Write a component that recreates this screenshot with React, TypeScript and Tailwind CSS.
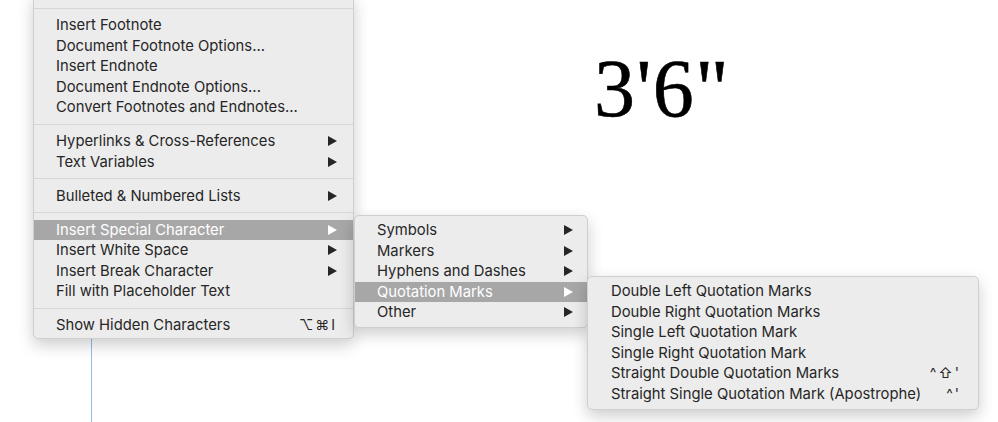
import React from 'react';

type Item = { label?: string; sep?: boolean; sub?: boolean; key?: string; active?: boolean };

const mainMenu: Item[] = [
  { sep: true },
  { label: 'Insert Footnote' },
  { label: 'Document Footnote Options...' },
  { label: 'Insert Endnote' },
  { label: 'Document Endnote Options...' },
  { label: 'Convert Footnotes and Endnotes...' },
  { sep: true },
  { label: 'Hyperlinks & Cross-References', sub: true },
  { label: 'Text Variables', sub: true },
  { sep: true },
  { label: 'Bulleted & Numbered Lists', sub: true },
  { sep: true },
  { label: 'Insert Special Character', sub: true, active: true },
  { label: 'Insert White Space', sub: true },
  { label: 'Insert Break Character', sub: true },
  { label: 'Fill with Placeholder Text' },
  { sep: true },
  { label: 'Show Hidden Characters', key: '⌥⌘I' },
];

const specialMenu: Item[] = [
  { label: 'Symbols', sub: true },
  { label: 'Markers', sub: true },
  { label: 'Hyphens and Dashes', sub: true },
  { label: 'Quotation Marks', sub: true, active: true },
  { label: 'Other', sub: true },
];

const quoteMenu: Item[] = [
  { label: 'Double Left Quotation Marks' },
  { label: 'Double Right Quotation Marks' },
  { label: 'Single Left Quotation Mark' },
  { label: 'Single Right Quotation Mark' },
  { label: 'Straight Double Quotation Marks', key: "^⇧'" },
  { label: 'Straight Single Quotation Mark (Apostrophe)', key: "^'" },
];

const Arrow = ({ light }: { light?: boolean }) => (
  <svg width="9" height="10" viewBox="0 0 9 10">
    <polygon points="0,0 9,5 0,10" fill={light ? '#ffffff' : '#262626'} />
  </svg>
);

const Menu = ({ items, pl, pr }: { items: Item[]; pl: string; pr: string }) => (
  <div className="flex flex-col">
    {items.map((it, i) =>
      it.sep ? (
        <div key={i} className="h-[13.5px] flex items-center">
          <div className="h-px w-full bg-[#d6d6d6]" />
        </div>
      ) : (
        <div
          key={i}
          className={`h-[20.5px] flex items-center justify-between ${pl} ${pr} ${
            it.active ? 'bg-[#a7a7a7] text-white' : 'text-[#262626]'
          }`}
        >
          <span>{it.label}</span>
          {it.sub && <Arrow light={it.active} />}
          {it.key && <span className="text-[14px] tracking-[2px]">{it.key}</span>}
        </div>
      )
    )}
  </div>
);

const panel =
  'absolute bg-[#ececec] border border-[#cfcfcf] rounded-[5px] shadow-[0_6px_16px_rgba(0,0,0,0.2)] overflow-hidden';

export default function App() {
  return (
    <div
      className="relative w-[998px] h-[422px] bg-white overflow-hidden text-[14.8px] leading-[20px]"
      style={{ fontFamily: 'Inter, "Noto Sans", sans-serif' }}
    >
      <div className="absolute left-[91px] top-[336px] w-px h-[90px] bg-[#8fbcf0]" />

      <div
        className="absolute left-[594px] top-[48px] text-[82px] leading-none tracking-[1.5px] text-black"
        style={{ fontFamily: '"Liberation Serif", serif', WebkitTextStroke: '0.6px black' }}
      >
        3'6"
      </div>

      <div className={`${panel} left-[33px] top-[-6px] w-[321px] pt-[6.5px] pb-[2.5px] rounded-t-none`}>
        <Menu items={mainMenu} pl="pl-[22px]" pr="pr-[16px]" />
      </div>

      <div className={`${panel} left-[354px] top-[215px] w-[234px] py-[4px]`}>
        <Menu items={specialMenu} pl="pl-[22px]" pr="pr-[14px]" />
      </div>

      <div className={`${panel} left-[587px] top-[276px] w-[392px] pt-[4px] pb-[5px]`}>
        <Menu items={quoteMenu} pl="pl-[23px]" pr="pr-[17px]" />
      </div>
    </div>
  );
}
